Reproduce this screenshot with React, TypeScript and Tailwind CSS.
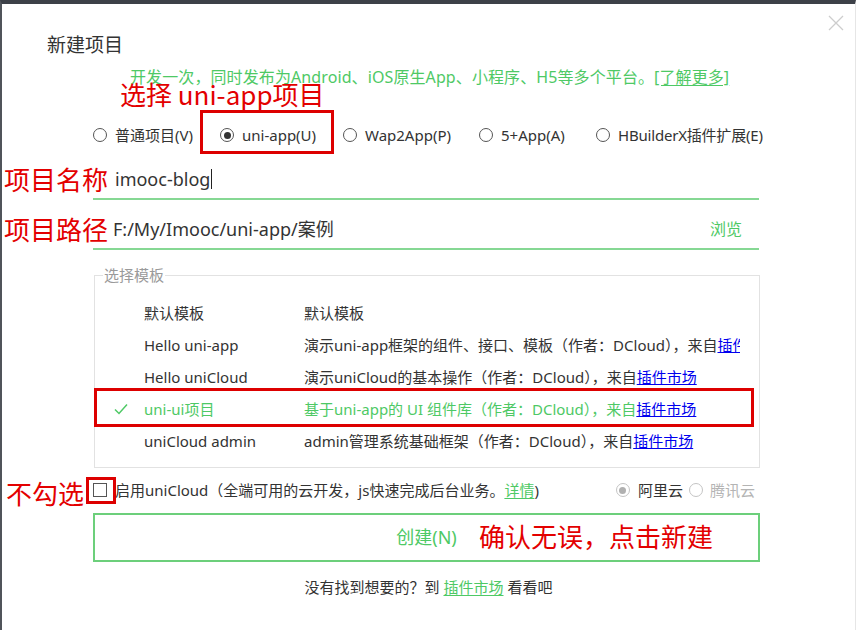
import React from "react";

const FONT = { fontFamily: '"Noto Sans", "Noto Sans CJK SC", sans-serif' };
const CJK = { fontFamily: '"Noto Sans CJK SC", sans-serif' };

function Radio({ checked, disabled }: { checked?: boolean; disabled?: boolean }) {
  return (
    <span
      className={`flex h-[14px] w-[14px] shrink-0 items-center justify-center rounded-full border ${
        disabled ? "border-[#c4c4c4]" : "border-[#555]"
      }`}
    >
      {checked && <span className={`h-[7px] w-[7px] rounded-full ${disabled ? "bg-[#b0b0b0]" : "bg-[#333]"}`} />}
    </span>
  );
}

const rows = [
  { name: "默认模板", desc: "默认模板", link: false },
  { name: "Hello uni-app", desc: "演示uni-app框架的组件、接口、模板（作者：DCloud），来自", link: true, linkText: "插件市场" },
  { name: "Hello uniCloud", desc: "演示uniCloud的基本操作（作者：DCloud），来自", link: true, linkText: "插件市场" },
  { name: "uni-ui项目", desc: "基于uni-app的 UI 组件库（作者：DCloud），来自", link: true, linkText: "插件市场", sel: true },
  { name: "uniCloud admin", desc: "admin管理系统基础框架（作者：DCloud），来自", link: true, linkText: "插件市场" },
];

export default function App() {
  return (
    <div
      className="relative h-[630px] w-[856px] overflow-hidden border-l-2 border-r border-t-4 border-l-[#50545a] border-r-[#e6e6e6] border-t-[#3d4148] bg-white text-[15px] text-[#333]"
      style={FONT}
    >
      {/* close */}
      <svg className="absolute left-[826px] top-[11px]" width="16" height="16" viewBox="0 0 16 16">
        <path d="M1 1 L15 15 M15 1 L1 15" stroke="#cdcdcd" strokeWidth="1.3" fill="none" />
      </svg>

      <div className="mt-[29px] pl-[45px] text-[19px] leading-[24px] text-[#333]">新建项目</div>

      <div className="mt-[10px] whitespace-nowrap pl-[128px] text-[16px] leading-[20px] tracking-[0.1px] text-[#4ec965]">
        开发一次，同时发布为Android、iOS原生App、小程序、H5等多个平台。
        <span className="underline underline-offset-2">[了解更多]</span>
      </div>

      <div className="mt-[38px] flex h-[20px] items-center pl-[91px] leading-[20px]">
        <div className="flex w-[127px] items-center gap-[8px]">
          <Radio />
          <span>普通项目(V)</span>
        </div>
        <div className="flex w-[123px] items-center gap-[8px]">
          <Radio checked />
          <span>uni-app(U)</span>
        </div>
        <div className="flex w-[136px] items-center gap-[8px]">
          <Radio />
          <span>Wap2App(P)</span>
        </div>
        <div className="flex w-[117px] items-center gap-[8px]">
          <Radio />
          <span>5+App(A)</span>
        </div>
        <div className="flex items-center gap-[8px]">
          <Radio />
          <span className="tracking-[-0.2px]">HBuilderX插件扩展(E)</span>
        </div>
      </div>

      <div className="ml-[91px] mt-[15px] flex h-[40px] w-[666px] items-center border-b-2 border-[#86d894] pl-[22px] text-[18px]">
        <span>imooc-blog</span>
        <span className="ml-[1px] h-[20px] w-[1px] bg-[#222]" />
      </div>

      <div className="ml-[91px] mt-[10px] flex h-[40px] w-[666px] items-center justify-between border-b-2 border-[#86d894] pl-[20px] pr-[17px]">
        <span className="text-[18px]">F:/My/Imooc/uni-app/案例</span>
        <span className="text-[16px] text-[#4ec965]">浏览</span>
      </div>

      <fieldset className="ml-[92px] mt-[16px] h-[202px] w-[666px] border border-[#e2e2e2] px-0 pb-[8px] pt-0">
        <legend className="ml-[8px] px-[1px] text-[15px] leading-[18px] text-[#9a9a9a]">选择模板</legend>
        <div className="relative mt-[13px] w-[645px] overflow-hidden">
          {rows.map((r, i) => (
            <div
              key={i}
              className={`flex h-[32px] items-center whitespace-nowrap ${r.sel ? "text-[#4ec965]" : ""}`}
            >
              <span className="flex w-[49px] shrink-0 justify-end pr-[16px]">
                {r.sel && (
                  <svg width="14" height="12" viewBox="0 0 14 12">
                    <path d="M1 6.5 L5 10.5 L13 1.5" stroke="#4ec965" strokeWidth="1.5" fill="none" />
                  </svg>
                )}
              </span>
              <span className="w-[160px] shrink-0">{r.name}</span>
              <span className="shrink-0">
                {r.desc}
                {r.link && <span className="text-[#0000ee] underline">{r.linkText}</span>}
              </span>
            </div>
          ))}
          <div className="absolute left-[645px] top-0 h-[67px] w-[9px] bg-[#e4e4e4]" />
        </div>
      </fieldset>

      <div className="ml-[91px] mt-[12px] flex h-[20px] w-[666px] items-center leading-[20px]">
        <span className="h-[14px] w-[14px] border border-[#555]" />
        <span className="ml-[8px]">
          启用uniCloud（全端可用的云开发，js快速完成后台业务。
          <span className="text-[#4ec965] underline underline-offset-2">详情</span>)
        </span>
        <div className="ml-auto mr-[4px] flex items-center">
          <Radio checked disabled />
          <span className="ml-[8px]">阿里云</span>
          <span className="ml-[6px]">
            <Radio disabled />
          </span>
          <span className="ml-[7px] text-[#b4b4b4]">腾讯云</span>
        </div>
      </div>

      <div className="ml-[91px] mt-[13px] flex h-[49px] w-[667px] items-center justify-center border-2 border-[#6ccf7b] text-[18px] text-[#4ec965]">
        创建(N)
      </div>

      <div className="mt-[15px] text-center leading-[20px]">
        没有找到想要的？到 <span className="text-[#4ec965] underline underline-offset-2">插件市场</span> 看看吧
      </div>

      {/* red annotations */}
      <div className="absolute left-[118px] top-[77px] whitespace-nowrap text-[26px] leading-none text-[#e30000]" style={CJK}>
        选择 uni-app项目
      </div>
      <div className="absolute left-[198px] top-[106px] h-[44px] w-[134px] border-[3px] border-[#dd0000]" />
      <div className="absolute left-[2px] top-[162px] text-[26px] leading-none text-[#e30000]" style={CJK}>
        项目名称
      </div>
      <div className="absolute left-[2px] top-[212px] text-[26px] leading-none text-[#e30000]" style={CJK}>
        项目路径
      </div>
      <div className="absolute left-[92px] top-[384px] h-[39px] w-[660px] border-[3px] border-[#dd0000]" />
      <div className="absolute left-[4px] top-[476px] text-[26px] leading-none text-[#e30000]" style={CJK}>
        不勾选
      </div>
      <div className="absolute left-[84px] top-[473px] h-[27px] w-[30px] border-[3px] border-[#dd0000]" />
      <div className="absolute left-[477px] top-[519px] whitespace-nowrap text-[26px] leading-none text-[#e30000]" style={CJK}>
        确认无误，点击新建
      </div>
    </div>
  );
}
